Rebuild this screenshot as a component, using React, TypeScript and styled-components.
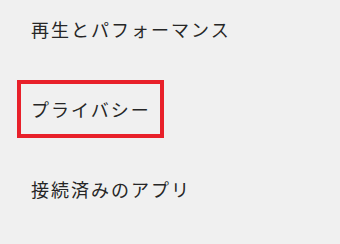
import React from "react";
import styled, { createGlobalStyle } from "styled-components";

const Global = createGlobalStyle`
  html, body { margin: 0; padding: 0; background: #f0f0f0; }
  body { width: 340px; height: 244px; overflow: hidden; }
`;

const Menu = styled.nav`
  display: flex;
  flex-direction: column;
  align-items: flex-start;
  gap: 22px;
  padding: 0 0 0 17px;
  font-family: "Noto Sans CJK JP", "Noto Sans", sans-serif;
`;

const Item = styled.div<{ $highlighted?: boolean }>`
  box-sizing: border-box;
  height: 58px;
  display: flex;
  align-items: center;
  padding: 0 9px 0 10px;
  border: 4px solid ${(p) => (p.$highlighted ? "#e8202a" : "transparent")};
  font-size: 18px;
  letter-spacing: 2px;
  color: #262626;
  white-space: nowrap;
`;

export default function App() {
  return (
    <>
      <Global />
      <Menu>
        <Item>再生とパフォーマンス</Item>
        <Item $highlighted>プライバシー</Item>
        <Item>接続済みのアプリ</Item>
      </Menu>
    </>
  );
}
